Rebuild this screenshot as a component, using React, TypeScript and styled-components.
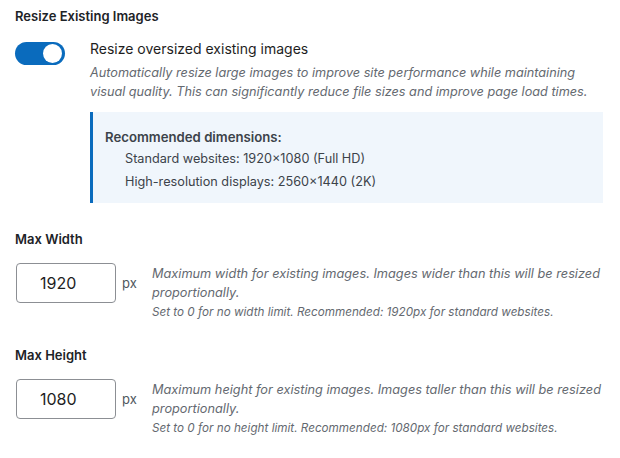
import React from "react";
import styled, { createGlobalStyle } from "styled-components";

const Global = createGlobalStyle`
  html, body { margin: 0; padding: 0; background: #fff; }
  body { font-family: Inter, "Noto Sans", sans-serif; color: #1e1e1e; }
`;

const Page = styled.div`
  padding: 6px 15px 0 15px;
  display: flex;
  flex-direction: column;
`;

const SectionTitle = styled.h3`
  margin: 0;
  font-size: 13px;
  font-weight: 600;
  line-height: 20px;
  color: #1d2327;
`;

const ToggleRow = styled.div`
  display: flex;
  gap: 25px;
  margin-top: 15px;
`;

const Switch = styled.div<{ $on: boolean }>`
  flex: none;
  width: 50px;
  height: 23px;
  border-radius: 12px;
  background: ${(p) => (p.$on ? "#0a6bbd" : "#c3c4c7")};
  position: relative;
  margin-top: 1px;
  &::after {
    content: "";
    position: absolute;
    top: 2px;
    left: ${(p) => (p.$on ? "28px" : "2px")};
    width: 19px;
    height: 19px;
    border-radius: 50%;
    background: #fff;
  }
`;

const ToggleBody = styled.div`
  display: flex;
  flex-direction: column;
  flex: 1;
`;

const ToggleLabel = styled.div`
  font-size: 14px;
  line-height: 15px;
  color: #1e1e1e;
`;

const Desc = styled.p`
  margin: 7px 0 0 0;
  font-size: 12.7px;
  font-style: italic;
  line-height: 19px;
  color: #646970;
`;

const Notice = styled.div`
  margin-top: 11px;
  margin-right: 2px;
  background: #f0f6fc;
  border-left: 3px solid #0a6bbd;
  padding: 14px 12px 10px 12px;
  display: flex;
  flex-direction: column;
`;

const NoticeTitle = styled.div`
  font-size: 13.2px;
  font-weight: 600;
  line-height: 22px;
  color: #3c434a;
`;

const NoticeItem = styled.div`
  font-size: 12.7px;
  line-height: 22.5px;
  padding-left: 20px;
  color: #3c434a;
`;

const FieldTitle = styled(SectionTitle)<{ $top: number }>`
  margin-top: ${(p) => p.$top}px;
`;

const FieldRow = styled.div`
  display: flex;
  align-items: flex-start;
  margin-top: 14px;
`;

const NumberInput = styled.input`
  box-sizing: border-box;
  width: 100px;
  height: 40px;
  margin-left: 1px;
  border: 1px solid #8c8f94;
  border-radius: 4px;
  text-align: left;
  font-family: inherit;
  font-size: 16px;
  color: #1e1e1e;
  background: #fff;
  padding: 0 0 0 23px;
  outline: none;
`;

const Unit = styled.span`
  font-size: 13px;
  color: #50575e;
  line-height: 40px;
  margin-left: 6px;
  width: 30px;
`;

const FieldHelp = styled.div`
  flex: 1;
  display: flex;
  flex-direction: column;
  padding-top: 1px;
`;

const HelpMain = styled.div`
  font-size: 12.75px;
  font-style: italic;
  line-height: 19px;
  color: #646970;
`;

const HelpNote = styled.div`
  font-size: 11.7px;
  font-style: italic;
  line-height: 16px;
  color: #646970;
  margin-top: 2px;
`;

export default function App() {
  return (
    <>
      <Global />
      <Page>
        <SectionTitle>Resize Existing Images</SectionTitle>
        <ToggleRow>
          <Switch $on={true} />
          <ToggleBody>
            <ToggleLabel>Resize oversized existing images</ToggleLabel>
            <Desc>
              Automatically resize large images to improve site performance while maintaining
              visual quality. This can significantly reduce file sizes and improve page load times.
            </Desc>
            <Notice>
              <NoticeTitle>Recommended dimensions:</NoticeTitle>
              <NoticeItem>Standard websites: 1920×1080 (Full HD)</NoticeItem>
              <NoticeItem>High-resolution displays: 2560×1440 (2K)</NoticeItem>
            </Notice>
          </ToggleBody>
        </ToggleRow>

        <FieldTitle $top={26}>Max Width</FieldTitle>
        <FieldRow>
          <NumberInput type="text" defaultValue="1920" />
          <Unit>px</Unit>
          <FieldHelp>
            <HelpMain>
              Maximum width for existing images. Images wider than this will be resized
              proportionally.
            </HelpMain>
            <HelpNote>Set to 0 for no width limit. Recommended: 1920px for standard websites.</HelpNote>
          </FieldHelp>
        </FieldRow>

        <FieldTitle $top={25}>Max Height</FieldTitle>
        <FieldRow>
          <NumberInput type="text" defaultValue="1080" />
          <Unit>px</Unit>
          <FieldHelp>
            <HelpMain>
              Maximum height for existing images. Images taller than this will be resized
              proportionally.
            </HelpMain>
            <HelpNote>Set to 0 for no height limit. Recommended: 1080px for standard websites.</HelpNote>
          </FieldHelp>
        </FieldRow>
      </Page>
    </>
  );
}
